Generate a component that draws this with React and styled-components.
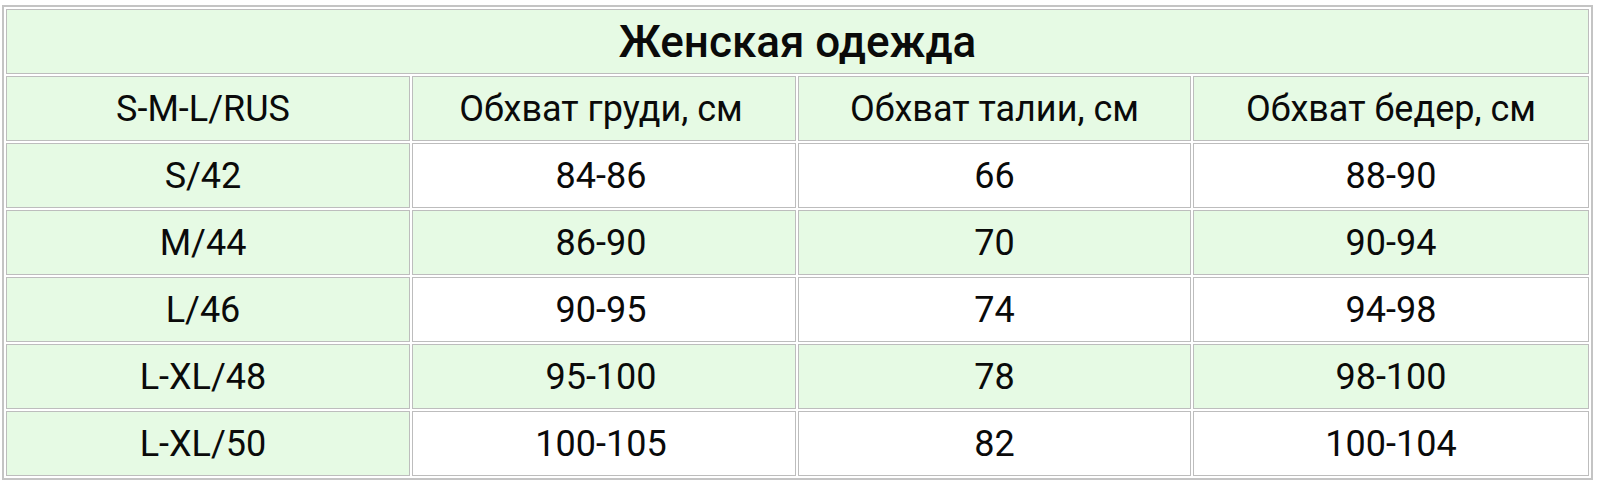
import React from 'react'
import styled, { createGlobalStyle } from 'styled-components'

const rows = [
  ['S/42', '84-86', '66', '88-90'],
  ['M/44', '86-90', '70', '90-94'],
  ['L/46', '90-95', '74', '94-98'],
  ['L-XL/48', '95-100', '78', '98-100'],
  ['L-XL/50', '100-105', '82', '100-104'],
]

const headers = ['S-M-L/RUS', 'Обхват груди, см', 'Обхват талии, см', 'Обхват бедер, см']
const widths = [404, 384, 393, 396]
// text in the first two columns sits a little left of centre
const insets = [10, 6, 0, 0]

export default function App() {
  return (
    <React.Fragment>
      <GlobalStyle />
      <Table>
        <colgroup>
          {widths.map((w, i) => (
            <Col key={i} $w={w} />
          ))}
        </colgroup>
        <tbody>
          <tr>
            <Title colSpan={4}>Женская одежда</Title>
          </tr>
          <tr>
            {headers.map((h, j) => (
              <Cell key={h} $green $inset={insets[j]}>{h}</Cell>
            ))}
          </tr>
          {rows.map((row, i) => (
            <tr key={row[0]}>
              {row.map((value, j) => (
                <Cell key={j} $green={j === 0 || i % 2 === 1} $inset={insets[j]}>
                  {value}
                </Cell>
              ))}
            </tr>
          ))}
        </tbody>
      </Table>
    </React.Fragment>
  )
}

const GlobalStyle = createGlobalStyle`
  body {
    margin: 0;
    background: #ffffff;
    font-family: Roboto, "Noto Sans", sans-serif;
  }
`

const Table = styled.table`
  margin: 5px 0 0 2px;
  width: 1589px;
  border: 2px solid #c4c4c4;
  border-spacing: 2px;
  table-layout: fixed;
  color: #0a0a0a;
`

const Col = styled.col`
  width: ${(p) => p.$w}px;
`

const Cell = styled.td`
  border: 1px solid #bdbdbd;
  background: ${(p) => (p.$green ? '#e6fae4' : '#ffffff')};
  height: 63px;
  padding: 0 ${(p) => p.$inset || 0}px 0 0;
  text-align: center;
  font-size: 36px;
  font-weight: 400;
`

const Title = styled(Cell).attrs({ $green: true })`
  font-weight: 500;
  font-size: 44px;
`
